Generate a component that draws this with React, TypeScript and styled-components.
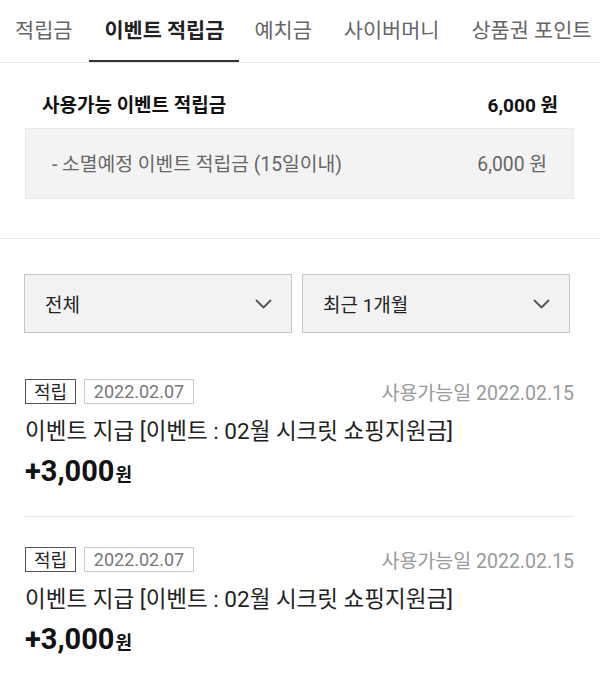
import React from "react";
import styled, { createGlobalStyle } from "styled-components";

const Global = createGlobalStyle`
  html, body { margin: 0; padding: 0; background: #fff; }
  body {
    font-family: Roboto, "Noto Sans CJK KR", sans-serif;
    color: #222;
    -webkit-font-smoothing: antialiased;
  }
  * { box-sizing: border-box; }
`;

const Page = styled.div`
  width: 600px;
  overflow: hidden;
`;

const TabBar = styled.nav`
  display: flex;
  height: 63px;
  border-bottom: 1px solid #e6e6e6;
  white-space: nowrap;
  overflow: hidden;
`;

const Tab = styled.div<{ $active?: boolean }>`
  position: relative;
  flex: none;
  display: flex;
  align-items: center;
  padding: 0 15px 5px;
  margin-right: ${(p) => (p.$active ? 0 : 2)}px;
  font-size: 20.8px;
  color: ${(p) => (p.$active ? "#222" : "#666")};
  font-weight: ${(p) => (p.$active ? 700 : 400)};
  &:first-child {
    margin-right: 2px;
  }
  &::after {
    content: "";
    display: ${(p) => (p.$active ? "block" : "none")};
    position: absolute;
    left: 0;
    right: 0;
    bottom: -1px;
    height: 3px;
    background: #333;
  }
`;

const Summary = styled.section`
  padding: 20px 26px 39px 25px;
  border-bottom: 1px solid #e8e8e8;
`;

const SummaryRow = styled.div`
  display: flex;
  justify-content: space-between;
  align-items: center;
  height: 40px;
  padding: 0 16px 0 17px;
  font-size: 19px;
  font-weight: 700;
  color: #111;
`;

const ExpireBox = styled.div`
  margin-top: 5px;
  height: 71px;
  display: flex;
  justify-content: space-between;
  align-items: center;
  padding: 0 26px 2px 26px;
  background: #f3f3f3;
  border: 1px solid #e9e9e9;
  font-size: 19.3px;
  color: #666;
`;

const Filters = styled.div`
  display: flex;
  gap: 10px;
  padding: 35px 0 16px 24px;
`;

const Select = styled.div`
  width: 268px;
  height: 59px;
  display: flex;
  align-items: center;
  justify-content: space-between;
  padding: 0 19px 0 20px;
  background: #f2f2f2;
  border: 1.5px solid #c6c6c6;
  font-size: 19px;
  color: #222;
`;

const List = styled.div`
  padding: 0 26px 0 25px;
`;

const Item = styled.div`
  padding: 30px 0 24px;
  border-bottom: 1px solid #e6e6e6;
`;

const MetaRow = styled.div`
  display: flex;
  align-items: center;
  height: 24px;
`;

const Tag = styled.span<{ $strong?: boolean }>`
  display: inline-flex;
  align-items: center;
  justify-content: center;
  height: 25px;
  width: ${(p) => (p.$strong ? 51 : 110)}px;
  margin-right: 8px;
  border: ${(p) => (p.$strong ? "1.5px solid #555" : "1.5px solid #cbcbcb")};
  color: ${(p) => (p.$strong ? "#222" : "#777")};
  font-size: 18px;
`;

const AvailDate = styled.span`
  margin-left: auto;
  font-size: 19.5px;
  color: #9a9a9a;
`;

const Title = styled.div`
  margin-top: 14px;
  line-height: 28px;
  font-size: 22.5px;
  color: #222;
  white-space: nowrap;
`;

const Amount = styled.div`
  margin-top: 9px;
  line-height: 34px;
  font-size: 29px;
  font-weight: 700;
  color: #111;
  span {
    font-size: 18px;
    margin-left: 1px;
  }
`;

const Chevron = () => (
  <svg width="17" height="10" viewBox="0 0 17 10" fill="none">
    <path d="M1.5 1.5 L8.5 8.5 L15.5 1.5" stroke="#555" strokeWidth="1.8" strokeLinecap="round" strokeLinejoin="round" />
  </svg>
);

const tabs = ["적립금", "이벤트 적립금", "예치금", "사이버머니", "상품권 포인트"];

const items = [
  { date: "2022.02.07", avail: "2022.02.15", title: "이벤트 지급 [이벤트 : 02월 시크릿 쇼핑지원금]", amount: "+3,000" },
  { date: "2022.02.07", avail: "2022.02.15", title: "이벤트 지급 [이벤트 : 02월 시크릿 쇼핑지원금]", amount: "+3,000" },
];

export default function App() {
  return (
    <Page>
      <Global />
      <TabBar>
        {tabs.map((t, i) => (
          <Tab key={t} $active={i === 1}>
            {t}
          </Tab>
        ))}
      </TabBar>
      <Summary>
        <SummaryRow>
          <span>사용가능 이벤트 적립금</span>
          <span>6,000 원</span>
        </SummaryRow>
        <ExpireBox>
          <span>- 소멸예정 이벤트 적립금 (15일이내)</span>
          <span>6,000 원</span>
        </ExpireBox>
      </Summary>
      <Filters>
        <Select>
          <span>전체</span>
          <Chevron />
        </Select>
        <Select>
          <span>최근 1개월</span>
          <Chevron />
        </Select>
      </Filters>
      <List>
        {items.map((it, i) => (
          <Item key={i}>
            <MetaRow>
              <Tag $strong>적립</Tag>
              <Tag>{it.date}</Tag>
              <AvailDate>사용가능일 {it.avail}</AvailDate>
            </MetaRow>
            <Title>{it.title}</Title>
            <Amount>
              {it.amount}
              <span>원</span>
            </Amount>
          </Item>
        ))}
      </List>
    </Page>
  );
}
